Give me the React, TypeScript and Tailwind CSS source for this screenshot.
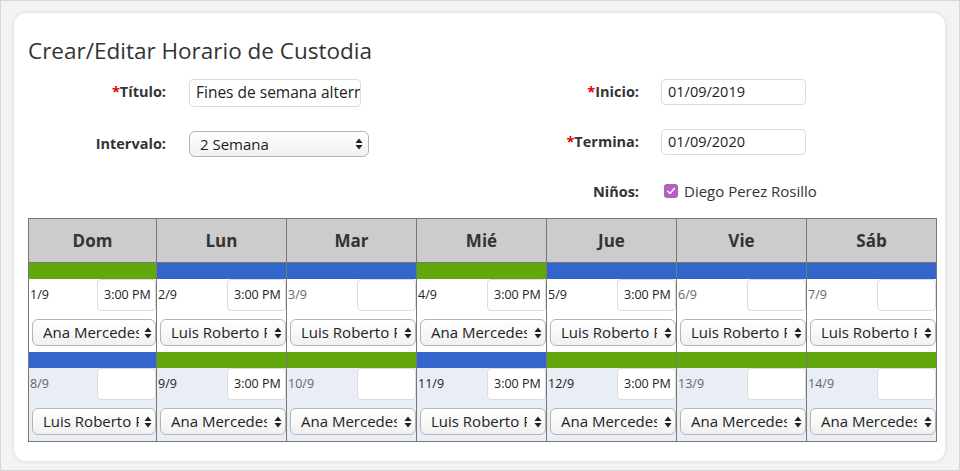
import React from 'react';

type Day = {
  date: string;
  time?: string;
  person: string;
  bar: 'green' | 'blue';
};

const ANA = 'Ana Mercedes Rosillo';
const LUIS = 'Luis Roberto Perez';

const days = ['Dom', 'Lun', 'Mar', 'Mié', 'Jue', 'Vie', 'Sáb'];

const week1: Day[] = [
  { date: '1/9', time: '3:00 PM', person: ANA, bar: 'green' },
  { date: '2/9', time: '3:00 PM', person: LUIS, bar: 'blue' },
  { date: '3/9', person: LUIS, bar: 'blue' },
  { date: '4/9', time: '3:00 PM', person: ANA, bar: 'green' },
  { date: '5/9', time: '3:00 PM', person: LUIS, bar: 'blue' },
  { date: '6/9', person: LUIS, bar: 'blue' },
  { date: '7/9', person: LUIS, bar: 'blue' },
];

const week2: Day[] = [
  { date: '8/9', person: LUIS, bar: 'blue' },
  { date: '9/9', time: '3:00 PM', person: ANA, bar: 'green' },
  { date: '10/9', person: ANA, bar: 'green' },
  { date: '11/9', time: '3:00 PM', person: LUIS, bar: 'blue' },
  { date: '12/9', time: '3:00 PM', person: ANA, bar: 'green' },
  { date: '13/9', person: ANA, bar: 'green' },
  { date: '14/9', person: ANA, bar: 'green' },
];

const SelectArrows = () => (
  <svg width="8" height="12" viewBox="0 0 8 12" className="shrink-0">
    <path d="M4 0.5 L7.5 5 H0.5 Z" fill="#222" />
    <path d="M0.5 7 H7.5 L4 11.5 Z" fill="#222" />
  </svg>
);

const Label = ({ text, required }: { text: string; required?: boolean }) => (
  <span className="text-[14.5px] leading-[20px] font-bold text-[#333]">
    {required && <span className="text-[#e00000]">*</span>}
    {text}
  </span>
);

const DayCell = ({ day, shaded }: { day: Day; shaded?: boolean }) => (
  <>
    <div className={`h-[16px] ${day.bar === 'green' ? 'bg-[#62a70c]' : 'bg-[#3366cc]'}`} />
    <div className={`h-[73px] flex flex-col ${shaded ? 'bg-[#e9edf5]' : 'bg-white'}`}>
      <div className="flex items-center justify-between h-[32px]">
        <span className={`pl-[1px] text-[12.5px] ${day.time ? 'text-[#222]' : 'text-[#666]'}`}>
          {day.date}
        </span>
        <div className="w-[59px] h-[32px] bg-white border border-[#dcdcdc] rounded-[4px] pl-[6px] flex items-center overflow-hidden text-[12.5px] text-[#222] whitespace-nowrap">
          {day.time ?? ''}
        </div>
      </div>
      <div className="mt-[8px] ml-[3px] h-[27px] flex items-center rounded-[6px] border border-[#b4b4b4] bg-gradient-to-b from-white to-[#f1f1f1] pl-[10px] pr-[3px]">
        <span className="w-[96px] overflow-hidden whitespace-nowrap text-[15px] text-[#222]">
          {day.person}
        </span>
        <span className="ml-auto">
          <SelectArrows />
        </span>
      </div>
    </div>
  </>
);

export default function App() {
  return (
    <div className="w-[960px] h-[471px] bg-[#f3f3f3] border border-[#d6d6d6] pt-[12px] pl-[13px] font-['Open_Sans',sans-serif]">
      <div className="w-[931px] h-[448px] bg-white rounded-[12px] shadow-[0_0_4px_rgba(0,0,0,0.13)] pt-[23px] pl-[14px]">
        <h1 className="text-[22.5px] leading-[30px] text-[#333]">Crear/Editar Horario de Custodia</h1>

        <div className="mt-[13px] flex">
          {/* left column */}
          <div className="w-[452px]">
            <div className="flex items-start">
              <div className="w-[138px] text-right">
                <Label text="Título:" required />
              </div>
              <div className="ml-[23px] w-[172px] h-[28px] border border-[#dcdcdc] rounded-[4px] pl-[6px] flex items-center overflow-hidden whitespace-nowrap text-[15.5px] text-[#222]">
                Fines de semana alternos
              </div>
            </div>
            <div className="mt-[24px] flex items-start">
              <div className="w-[138px] text-right">
                <Label text="Intervalo:" />
              </div>
              <div className="ml-[23px] w-[180px] h-[26px] rounded-[6px] border border-[#b4b4b4] bg-gradient-to-b from-white to-[#f1f1f1] pl-[10px] pr-[5px] flex items-center text-[15px] text-[#222]">
                2 Semana
                <span className="ml-auto">
                  <SelectArrows />
                </span>
              </div>
            </div>
          </div>

          {/* right column */}
          <div>
            <div className="flex items-start">
              <div className="w-[159px] text-right">
                <Label text="Inicio:" required />
              </div>
              <div className="ml-[22px] w-[145px] h-[26px] border border-[#dcdcdc] rounded-[4px] pl-[6px] flex items-center text-[14.5px] text-[#222]">
                01/09/2019
              </div>
            </div>
            <div className="mt-[24px] flex items-start">
              <div className="w-[159px] text-right">
                <Label text="Termina:" required />
              </div>
              <div className="ml-[22px] w-[145px] h-[26px] border border-[#dcdcdc] rounded-[4px] pl-[6px] flex items-center text-[14.5px] text-[#222]">
                01/09/2020
              </div>
            </div>
            <div className="mt-[24px] flex items-center">
              <div className="w-[159px] text-right">
                <Label text="Niños:" />
              </div>
              <div className="ml-[25px] flex items-center gap-[6px]">
                <span className="w-[14px] h-[14px] rounded-[3px] bg-[#b65fbd] flex items-center justify-center">
                  <svg width="10" height="10" viewBox="0 0 10 10">
                    <path d="M1.8 5.2 L4 7.4 L8.3 2.4" fill="none" stroke="white" strokeWidth="1.5" strokeLinecap="round" strokeLinejoin="round" />
                  </svg>
                </span>
                <span className="text-[15px] text-[#333]">Diego Perez Rosillo</span>
              </div>
            </div>
          </div>
        </div>

        <div className="mt-[15px] w-[909px] border border-[#777] grid grid-cols-[127px_repeat(6,minmax(0,1fr))]">
          {days.map((d, i) => (
            <div key={d} className={`flex flex-col min-w-0 ${i > 0 ? 'border-l border-[#777]' : ''}`}>
              <div className="h-[44px] bg-[#cccccc] border-b border-[#777] flex items-center justify-center text-[17px] font-bold text-[#333]">
                {d}
              </div>
              <DayCell day={week1[i]} />
              <DayCell day={week2[i]} shaded />
            </div>
          ))}
        </div>
      </div>
    </div>
  );
}
